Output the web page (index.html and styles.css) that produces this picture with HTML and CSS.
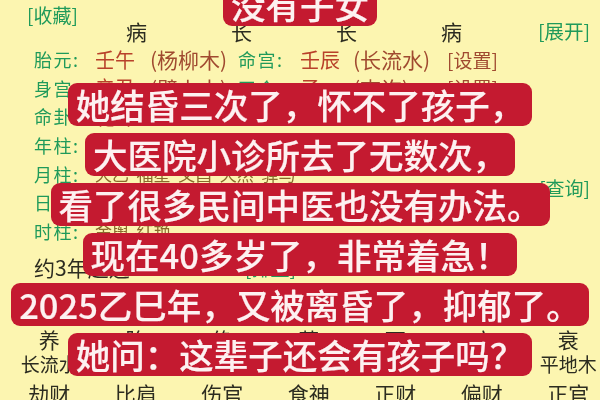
FILE: index.html
```html
<!DOCTYPE html>
<html lang="zh-CN">

<head>
    <meta charset="UTF-8">
    <title>没有子女</title>
    <link rel="stylesheet" href="styles.css">
</head>

<body>
    <div class="chart">
        <div class="head">
            <div class="link-line"><span class="green">[收藏]</span></div>
            <div class="stage-line">
                <span class="stage">病</span>
                <span class="stage">长</span>
                <span class="stage">长</span>
                <span class="stage">病</span>
                <span class="green open">[展开]</span>
            </div>
        </div>

        <div class="info">
            <span class="label">胎元:</span><span class="gan">壬午</span><span class="nayin">(杨柳木)</span>
            <span class="label second">命宫:</span><span class="gan short">壬辰</span><span class="nayin wide">(长流水)</span>
            <span class="setting">[设置]</span>
        </div>
        <div class="info">
            <span class="label">身宫:</span><span class="gan">辛丑</span><span class="nayin">(壁上土)</span>
            <span class="label second">司令:</span><span class="gan short">子</span><span class="nayin wide">(查询)</span>
            <span class="setting">[设置]</span>
        </div>
        <div class="info">
            <span class="label">命卦:</span><span class="gan">乾卦</span>
        </div>
        <div class="info">
            <span class="label">年柱:</span><span class="gan">天德</span>
        </div>
        <div class="info">
            <span class="label">月柱:</span><span class="shensha">天乙&nbsp;&nbsp;福星&nbsp;&nbsp;文昌&nbsp;&nbsp;天然&nbsp;&nbsp;驿马</span>
            <span class="green query">[查询]</span>
        </div>
        <div class="info">
            <span class="label">日柱:</span><span class="shensha">将星</span>
        </div>
        <div class="info">
            <span class="label">时柱:</span><span class="shensha">金舆&nbsp;&nbsp;红艳</span>
        </div>

        <div class="luck">
            <span class="luck-text">约3年起运</span>
            <span class="green luck-link">[排盘]</span>
        </div>

        <div class="cols stages">
            <span>养</span><span>胎</span><span>绝</span><span>墓</span><span>死</span><span>病</span><span>衰</span>
        </div>
        <div class="cols nayins">
            <span>长流水</span><span>杨柳木</span><span>壁上土</span><span>大海水</span><span>路旁土</span><span>天河水</span><span>平地木</span>
        </div>
        <div class="cols gods">
            <span>劫财</span><span>比肩</span><span>伤官</span><span>食神</span><span>正财</span><span>偏财</span><span>正官</span>
        </div>
    </div>

    <div class="captions">
        <div class="caption title">没有子女</div>
        <div class="caption">她结昏三次了，怀不了孩子，</div>
        <div class="caption">大医院小诊所去了无数次，</div>
        <div class="caption">看了很多民间中医也没有办法。</div>
        <div class="caption">现在40多岁了，非常着急！</div>
        <div class="caption">2025乙巳年，又被离昏了，抑郁了。</div>
        <div class="caption">她问：这辈子还会有孩子吗？</div>
    </div>
</body>

</html>
```

FILE: styles.css
```css
* {
    margin: 0;
    padding: 0;
    box-sizing: border-box;
}

html,
body {
    width: 600px;
    height: 400px;
    overflow: hidden;
}

body {
    position: relative;
    background-color: #fcf5b0;
    color: #2c2c20;
    font-family: "Noto Sans CJK SC", "Liberation Sans", sans-serif;
}

.chart {
    height: 400px;
    filter: blur(0.4px);
}

.green {
    color: #1f9a5a;
}

/* top block */
.head {
    height: 45px;
    padding-top: 7px;
}

.link-line {
    height: 16px;
    padding-left: 27px;
    font-size: 19px;
    line-height: 16px;
}

.stage-line {
    display: flex;
    height: 16px;
    padding-left: 84px;
    font-size: 21px;
    line-height: 16px;
}

.stage {
    width: 105px;
    text-align: center;
}

.open {
    margin-left: 34px;
    font-size: 19.5px;
}

/* info rows */
.info {
    display: flex;
    align-items: center;
    height: 28.6px;
    padding: 0 10px 0 34px;
    font-size: 20px;
    color: #b8412a;
    white-space: nowrap;
}

.label {
    width: 61px;
    font-size: 18px;
    letter-spacing: 1.5px;
    color: #1f9a5a;
}

.second {
    width: 62px;
}

.gan {
    width: 55px;
}

.short {
    width: 53px;
}

.nayin {
    width: 88px;
    font-size: 21px;
    color: #a04a30;
}

.wide {
    width: 94px;
}

.setting {
    font-size: 19px;
    color: #a04a30;
}

.shensha {
    font-size: 17px;
    color: #8a6a2c;
}

.query {
    margin-left: auto;
    margin-top: 28px;
    font-size: 19px;
}

/* luck row */
.luck {
    display: flex;
    align-items: center;
    height: 28px;
    margin-top: 8px;
    padding-left: 34px;
    font-size: 21px;
}

.luck-text {
    width: 211px;
}

.luck-link {
    font-size: 19px;
}

/* seven columns at the bottom */
.cols {
    display: grid;
    grid-template-columns: repeat(7, 86.5px);
    padding-left: 6px;
    text-align: center;
    white-space: nowrap;
}

.stages {
    height: 22px;
    margin-top: 47px;
    font-size: 21px;
    line-height: 22px;
}

.nayins {
    height: 28px;
    font-size: 19px;
    line-height: 28px;
}

.gods {
    height: 30px;
    font-size: 21px;
    line-height: 30px;
}

/* red subtitles over the chart */
.captions {
    position: absolute;
    top: -17px;
    left: 0;
    right: 0;
    display: flex;
    flex-direction: column;
    align-items: center;
    gap: 7px;
}

.caption {
    height: 43px;
    padding: 0 8px;
    border-radius: 9px;
    background-color: #c41a30;
    color: #fdf1f1;
    font-size: 34.5px;
    font-weight: 500;
    line-height: 42px;
    white-space: nowrap;
    -webkit-text-stroke: 0.2px #fdf1f1;
    filter: blur(0.3px);
}

.title {
    margin-bottom: 50px;
}
```
